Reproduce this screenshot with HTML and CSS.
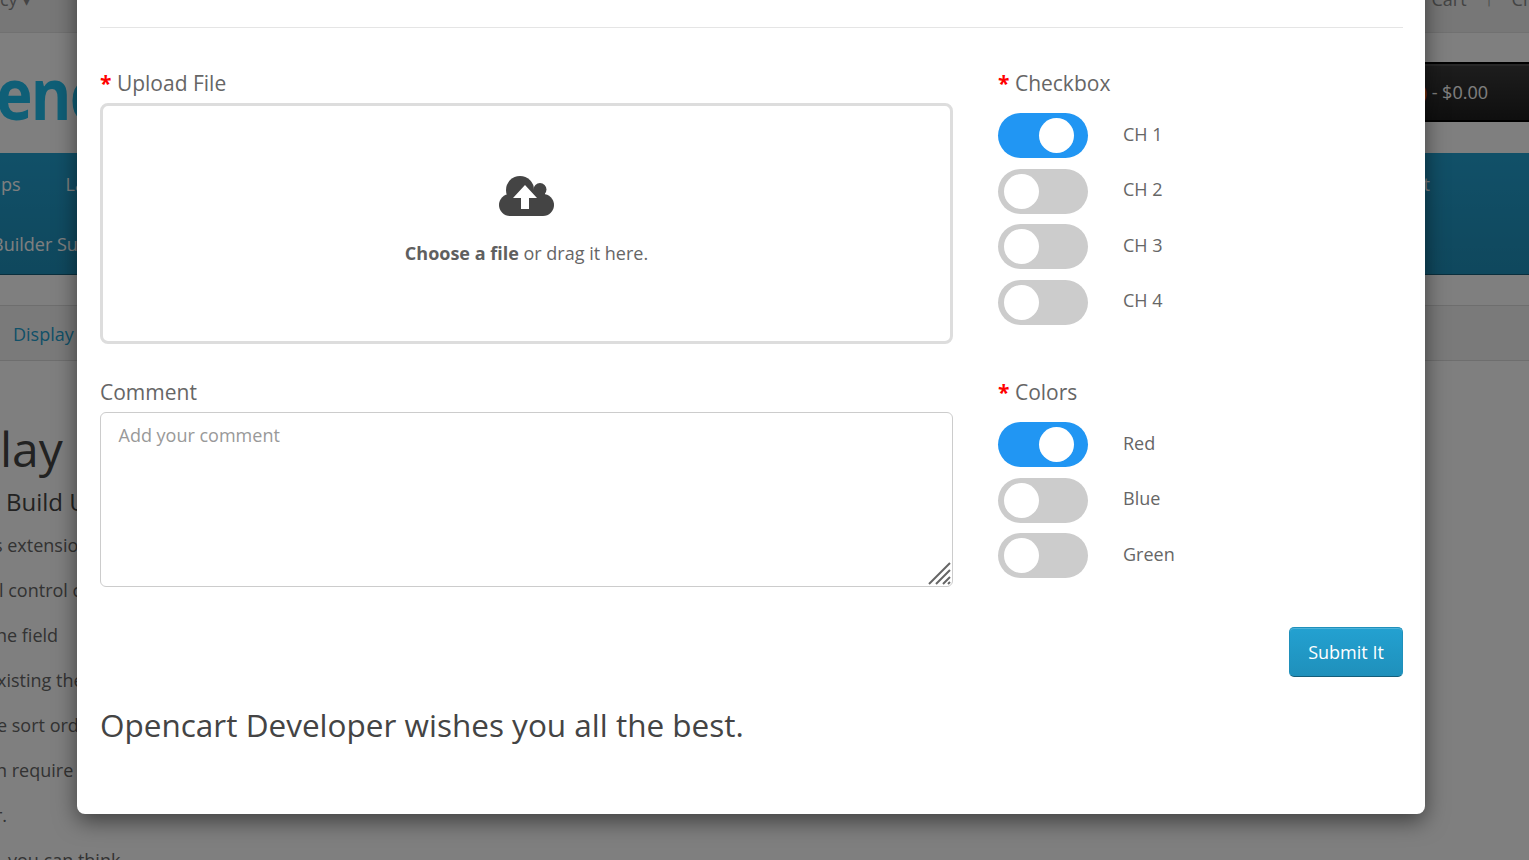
FILE: index.html
```html
<!DOCTYPE html>
<html lang="en">
<head>
  <meta charset="UTF-8">
  <meta name="viewport" content="width=device-width, initial-scale=1">
  <title>Display Form Builder</title>
  <link rel="stylesheet" href="styles.css">
</head>
<body>
  <!-- Store page behind the popup -->
  <div class="page">
    <div class="top-bar">
      <span class="top-left">cy &#9662;</span>
      <span class="top-right"><span>Cart</span><span class="top-icon">&#8593;</span><span>Ch</span></span>
    </div>
    <div class="store-header">
      <div class="logo">enc</div>
      <div class="cart-total"><span class="cart-count">)</span> - $0.00</div>
    </div>
    <div class="main-menu">
      <div class="menu-row"><span class="menu-apps">ps</span><span class="menu-la">La</span><span class="menu-end">t</span></div>
      <div class="menu-row"><span class="menu-builder">Builder Su</span></div>
    </div>
    <div class="breadcrumb"><a>Display</a></div>
    <div class="article">
      <h1>lay</h1>
      <h2>Build U</h2>
      <p class="clip-a">s extensio</p>
      <p class="clip-b">l control c</p>
      <p class="clip-c">ne field</p>
      <p class="clip-d">xisting the</p>
      <p class="clip-e">e sort ord</p>
      <p class="clip-f">n require</p>
      <p class="clip-g">r.</p>
      <p class="clip-h">you can think</p>
    </div>
  </div>

  <!-- Modal Popup -->
  <div class="modal-overlay">
    <div class="modal">
      <div class="modal-header"></div>
      <form class="form-grid">
        <div class="field">
          <label class="field-label"><span class="required">*</span> Upload File</label>
          <div class="upload-box">
            <svg class="upload-icon" viewBox="0 0 55 40" width="55" height="40" aria-hidden="true">
              <g fill="#444">
                <circle cx="21" cy="14" r="14"/>
                <circle cx="41" cy="13.5" r="6.5"/>
                <circle cx="11" cy="29" r="11"/>
                <circle cx="44" cy="29" r="11"/>
                <rect x="11" y="14" width="33" height="26"/>
                <rect x="34" y="14" width="12" height="8"/>
              </g>
              <polygon fill="#fff" points="26,9 38,22 30,22 30,33 22,33 22,22 14,22"/>
            </svg>
            <p class="upload-text"><strong>Choose a file</strong> or drag it here.</p>
          </div>
        </div>
        <div class="field">
          <label class="field-label"><span class="required">*</span> Checkbox</label>
          <div class="switch-list">
            <div class="switch-row"><span class="switch on"></span><span class="switch-text">CH 1</span></div>
            <div class="switch-row"><span class="switch"></span><span class="switch-text">CH 2</span></div>
            <div class="switch-row"><span class="switch"></span><span class="switch-text">CH 3</span></div>
            <div class="switch-row"><span class="switch"></span><span class="switch-text">CH 4</span></div>
          </div>
        </div>
        <div class="field">
          <label class="field-label comment-label" for="comment">Comment</label>
          <div class="comment-wrap">
            <textarea id="comment" placeholder="Add your comment"></textarea>
            <svg class="resize-grip" viewBox="0 0 24 24" width="24" height="24" aria-hidden="true">
              <path d="M1 22 L22 1 M8 22 L22 8 M15 22 L22 15 M20 22 L22 20" stroke="#666" stroke-width="2" fill="none"/>
            </svg>
          </div>
        </div>
        <div class="field">
          <label class="field-label"><span class="required">*</span> Colors</label>
          <div class="switch-list">
            <div class="switch-row"><span class="switch on"></span><span class="switch-text">Red</span></div>
            <div class="switch-row"><span class="switch"></span><span class="switch-text">Blue</span></div>
            <div class="switch-row"><span class="switch"></span><span class="switch-text">Green</span></div>
          </div>
        </div>
      </form>
      <div class="form-actions">
        <button type="button" class="btn-submit">Submit It</button>
      </div>
      <h3 class="wishes">Opencart Developer wishes you all the best.</h3>
    </div>
  </div>
</body>
</html>
```

FILE: styles.css
```css
/* Base Reset & Typography */
* { box-sizing: border-box; margin: 0; padding: 0; }
html, body { height: 100%; overflow: hidden; }
body {
  font-family: 'Open Sans', 'Liberation Sans', sans-serif;
  font-size: 18px;
  color: #666;
  background: #fff;
}

/* Store page behind the popup */
.page {
  height: 860px;
  overflow: hidden;
}
.top-bar {
  display: flex;
  justify-content: space-between;
  height: 33px;
  background: #eee;
  border-bottom: 1px solid #e2e2e2;
  color: #888;
  line-height: 18px;
  overflow: hidden;
}
.top-left { margin: -10px 0 0 0; }
.top-right {
  display: flex;
  gap: 18px;
  margin: -10px -5px 0 0;
}
.store-header {
  display: flex;
  justify-content: space-between;
  align-items: center;
  height: 120px;
}
.logo {
  font-weight: 700;
  font-size: 72px;
  letter-spacing: -2px;
  line-height: 72px;
  color: #1fbfee;
  margin: -2px 0 0 -4px;
  transform: scaleX(0.86);
  transform-origin: left center;
}
.cart-total {
  height: 60px;
  margin-top: -2px;
  padding: 15px 41px 0 0;
  background: linear-gradient(#3c3c3c, #1e1e1e);
  border: 1px solid #000;
  border-width: 2px 0;
  box-shadow: inset 0 2px 0 rgba(255,255,255,0.1);
  width: 200px;
  text-align: right;
  color: #fff;
  line-height: 26px;
}
.cart-count { color: #ff6a00; }
.main-menu {
  height: 122px;
  background: linear-gradient(#23a1d1, #1f90bb);
  border-bottom: 1px solid #145e7a;
  color: #fff;
}
.menu-row {
  display: flex;
  height: 60px;
  padding-top: 18px;
  line-height: 26px;
}
.menu-apps { margin-left: 1px; }
.menu-la { margin-left: 45px; }
.menu-end { margin-left: auto; margin-right: 99px; }
.menu-builder { margin-left: -8px; }
.breadcrumb {
  height: 56px;
  margin-top: 30px;
  padding: 15px 13px 0;
  background: #f5f5f5;
  border: 1px solid #ddd;
  border-width: 1px 0;
  line-height: 26px;
}
.breadcrumb a { color: #23a1d1; }
.article h1 {
  font-size: 48px;
  font-weight: 400;
  color: #444;
  line-height: 60px;
  margin: 58px 0 0 0;
}
.article h2 {
  font-size: 24px;
  font-weight: 400;
  color: #444;
  line-height: 32px;
  margin: 7px 0 0 6px;
}
.article p {
  height: 45px;
  line-height: 26px;
  color: #666;
}
.article h2 + p { margin-top: 14px; }
.clip-a { margin-left: -6px; }
.clip-b { margin-left: -1px; }
.clip-c { margin-left: -4px; }
.clip-d { margin-left: -3px; }
.clip-e { margin-left: -3px; }
.clip-f { margin-left: -4px; }
.clip-g { margin-left: -5px; }
.clip-h { margin-left: 8px; }

/* Modal Popup */
.modal-overlay {
  position: absolute;
  top: 0;
  left: 0;
  width: 100%;
  height: 100%;
  background: rgba(0,0,0,0.5);
  display: flex;
  justify-content: flex-start;
  align-items: flex-end;
  overflow: hidden;
  padding: 0 0 46px 77px;
}
.modal {
  flex: none;
  width: 1348px;
  padding: 0 22px 69px 23px;
  background: #fff;
  border-radius: 8px;
  box-shadow: 0 7px 22px rgba(0,0,0,0.5);
}
.modal-header {
  height: 80px;
  border-bottom: 1px solid #e5e5e5;
  margin-bottom: 42px;
}
.form-grid {
  display: grid;
  grid-template-columns: 853px 405px;
  grid-template-rows: 274px 208px;
  column-gap: 45px;
  row-gap: 35px;
}
.field-label {
  display: block;
  font-size: 21px;
  line-height: 26px;
  color: #666;
}
.comment-label { margin-bottom: 7px; }
.required { color: #f00; font-weight: 700; }

/* Upload box */
.upload-box {
  display: flex;
  flex-direction: column;
  align-items: center;
  height: 241px;
  margin-top: 7px;
  padding-top: 70px;
  border: 3px solid #ddd;
  border-radius: 8px;
}
.upload-text {
  margin-top: 24px;
  line-height: 26px;
}
.upload-text strong { font-weight: 700; color: #5f5f5f; }

/* Toggle switches */
.switch-list {
  display: flex;
  flex-direction: column;
  gap: 10.5px;
  margin-top: 17px;
}
.switch-row {
  display: flex;
  align-items: center;
  gap: 35px;
  height: 45px;
  line-height: 26px;
}
.switch-text { margin-top: -3.2px; }
.switch {
  position: relative;
  width: 90px;
  height: 45px;
  border-radius: 23px;
  background: #ccc;
}
.switch::before {
  content: "";
  position: absolute;
  top: 5px;
  left: 6px;
  width: 35px;
  height: 35px;
  border-radius: 50%;
  background: #fff;
}
.switch.on { background: #2196f3; }
.switch.on::before { left: 41px; }

/* Comment */
.comment-wrap {
  position: relative;
  height: 175px;
}
.comment-wrap textarea {
  display: block;
  width: 100%;
  height: 100%;
  padding: 9px 17.5px;
  border: 1px solid #ccc;
  border-radius: 6px;
  font-family: inherit;
  font-size: 18px;
  line-height: 26px;
  color: #666;
  resize: none;
  outline: none;
}
.comment-wrap textarea::placeholder { color: #999; opacity: 1; }
.resize-grip {
  position: absolute;
  right: 1px;
  bottom: 1px;
}

/* Actions */
.form-actions {
  display: flex;
  justify-content: flex-end;
  margin-top: 40px;
}
.btn-submit {
  width: 114px;
  height: 50px;
  font-family: inherit;
  font-size: 18px;
  color: #fff;
  background: linear-gradient(#23a1d1, #1f90bb);
  border: 1px solid #1f90bb;
  border-bottom-color: #145e7a;
  border-radius: 5px;
  box-shadow: inset 0 1px 0 rgba(255,255,255,0.2);
  cursor: pointer;
}
.wishes {
  margin-top: 28px;
  font-size: 31.5px;
  font-weight: 400;
  line-height: 40px;
  color: #444;
}
```
